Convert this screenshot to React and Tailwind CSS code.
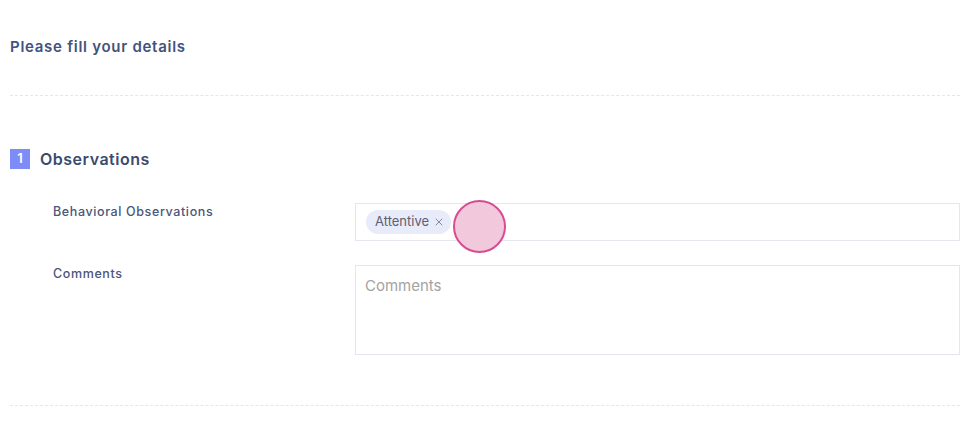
import { X } from 'lucide-react';

export default function App() {
  return (
    <div className="w-[960px] h-[445px] overflow-hidden bg-white font-['Inter',sans-serif]">
      {/* Header */}
      <div className="pl-[10px] pt-[37px]">
        <h1 className="text-[15px] font-semibold leading-[20px] text-[#44527c] tracking-[0.72px]">
          Please fill your details
        </h1>
      </div>
      <div className="ml-[10px] mt-[38px] border-t border-dashed border-[#e4e6ee]" />

      {/* Section */}
      <div className="pl-[10px] pt-[51px]">
        <div className="flex items-center gap-[10px]">
          <span className="flex h-[20px] w-[20px] items-center justify-center bg-[#7d8cf6] text-[13px] font-semibold text-white">
            1
          </span>
          <h2 className="text-[16px] font-semibold tracking-[0.5px] text-[#3c4a6e]">Observations</h2>
        </div>

        <div className="mt-[32px] flex flex-col gap-[24px]">
          <div className="flex">
            <label className="w-[345px] pl-[43px] text-[12.5px] font-medium tracking-[0.62px] text-[#4b5679]">
              Behavioral Observations
            </label>
            <div className="relative flex h-[38px] flex-1 items-center border border-[#e6e7ee] pl-[10px]">
              <span className="flex h-[24px] items-center gap-[4px] rounded-full bg-[#e8ebfa] pl-[9px] pr-[6px] text-[13px] text-[#5b6072]">
                Attentive
                <X size={12} strokeWidth={1.6} className="text-[#6b7080]" />
              </span>
              <span className="absolute left-[97px] top-[-4px] h-[53px] w-[53px] rounded-full border-2 border-[#d94b91] bg-[#f2c8dd]" />
            </div>
          </div>

          <div className="flex">
            <label className="w-[345px] pl-[43px] text-[12.5px] font-medium tracking-[0.62px] text-[#4b5679]">
              Comments
            </label>
            <textarea
              placeholder="Comments"
              className="h-[90px] flex-1 resize-none border border-[#e6e7ee] px-[9px] py-[9px] text-[15px] text-[#444] placeholder:text-[#a3a3a3] outline-none"
            />
          </div>
        </div>
      </div>

      <div className="ml-[10px] mt-[50px] border-t border-dashed border-[#e4e6ee]" />
    </div>
  );
}
